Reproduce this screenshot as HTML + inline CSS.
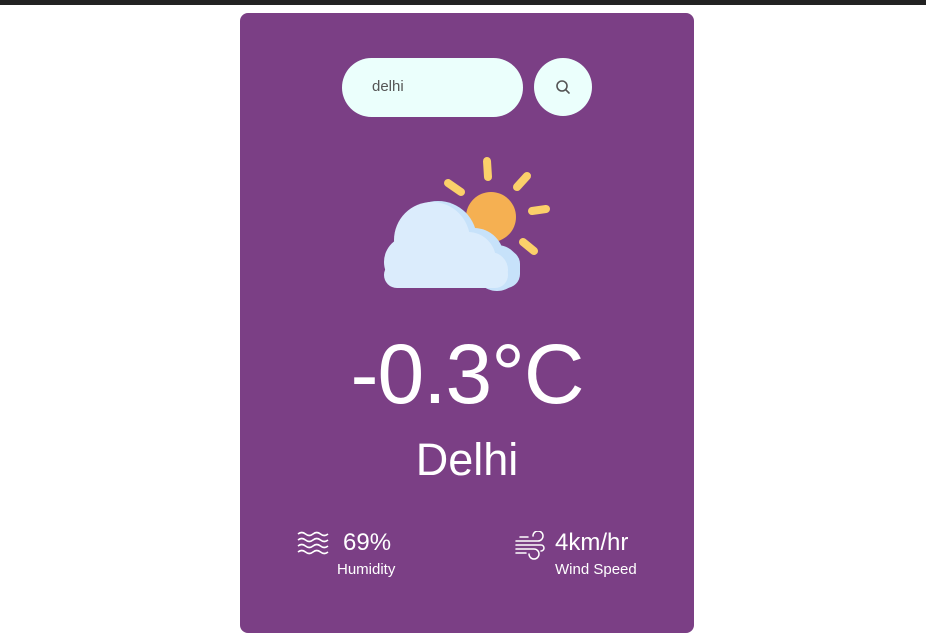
<!DOCTYPE html>
<html><head><meta charset="utf-8"><style>
*{margin:0;padding:0;box-sizing:border-box}
body{width:926px;height:602px;background:#fff;overflow:hidden;font-family:"Segoe UI","Liberation Sans",sans-serif;position:relative}
.top{position:absolute;left:0;top:0;width:926px;height:5px;background:#222}
.card{position:absolute;left:240px;top:13px;width:454px;height:620px;background:#7b3f85;border-radius:8px;color:#fff}
.inp{position:absolute;left:102px;top:45px;width:181px;height:59px;border-radius:30px;background:#ebfffc;color:#555;font-size:15px;padding:20px 0 0 30px}
.btn{position:absolute;left:294px;top:45px;width:58px;height:58px;border-radius:50%;background:#ebfffc}
.t{position:absolute;left:0;width:454px;text-align:center;white-space:nowrap}
</style></head><body>
<div class="top"></div>
<div class="card">
<div class="inp">delhi</div>
<div class="btn"><svg width="58" height="58" viewBox="0 0 58 58"><circle cx="28" cy="28" r="5" fill="none" stroke="#555" stroke-width="1.6"/><line x1="31.7" y1="31.7" x2="35" y2="35" stroke="#555" stroke-width="1.6" stroke-linecap="round"/></svg></div>
<svg style="position:absolute;left:130px;top:137px" width="200" height="150" viewBox="0 0 200 150">
<g stroke="#fbd06a" stroke-width="8" stroke-linecap="round">
<line x1="117" y1="11" x2="118" y2="27"/><line x1="78" y1="33" x2="91" y2="42"/><line x1="157" y1="26" x2="147" y2="37"/><line x1="162" y1="61" x2="176" y2="59"/><line x1="153" y1="92" x2="164" y2="101"/></g>
<circle cx="121" cy="67" r="25" fill="#f5b052"/>
<g fill="#c7e2fa">
<circle cx="68" cy="90" r="39"/><circle cx="104" cy="108" r="30"/><circle cx="127" cy="118" r="23"/><rect x="40" y="100" width="110" height="38" rx="14"/></g>
<g fill="#dbecfc">
<circle cx="40" cy="112" r="26"/><circle cx="62" cy="90" r="38"/><circle cx="98" cy="110" r="28"/><circle cx="120" cy="120" r="18"/><rect x="14" y="112" width="124" height="26" rx="13"/></g>
</svg>
<div class="t" style="top:311px;font-size:84px;line-height:100px;letter-spacing:-1px">-0.3°C</div>
<div class="t" style="top:418px;font-size:45px;line-height:58px">Delhi</div>
<svg style="position:absolute;left:57px;top:518px" width="32" height="26" viewBox="0 0 32 26" fill="none" stroke="#fff" stroke-width="1.6">
<path d="M1 3 q3.75-3 7.5 0 t7.5 0 t7.5 0 t7.5 0"/><path d="M1 9 q3.75-3 7.5 0 t7.5 0 t7.5 0 t7.5 0"/><path d="M1 15 q3.75-3 7.5 0 t7.5 0 t7.5 0 t7.5 0"/><path d="M1 21 q3.75-3 7.5 0 t7.5 0 t7.5 0 t7.5 0"/></svg>
<div style="position:absolute;left:103px;top:514px;font-size:24px;line-height:32px">69%</div>
<div style="position:absolute;left:97px;top:547px;font-size:15px;line-height:20px">Humidity</div>
<svg style="position:absolute;left:274px;top:518px" width="34" height="30" viewBox="0 0 34 30" fill="none" stroke="#fff" stroke-width="1.5" stroke-linecap="round">
<path d="M2 10 H24 a5 5 0 1 0 -5 -5"/><path d="M2 14 H27 a3 3 0 0 1 0 6"/><path d="M2 18 H20 a5 5 0 1 1 -5 5"/><path d="M6 6 H14"/><path d="M2 22 H12"/></svg>
<div style="position:absolute;left:315px;top:514px;font-size:24px;line-height:32px">4km/hr</div>
<div style="position:absolute;left:315px;top:547px;font-size:15px;line-height:20px">Wind Speed</div>
</div>
</body></html>
